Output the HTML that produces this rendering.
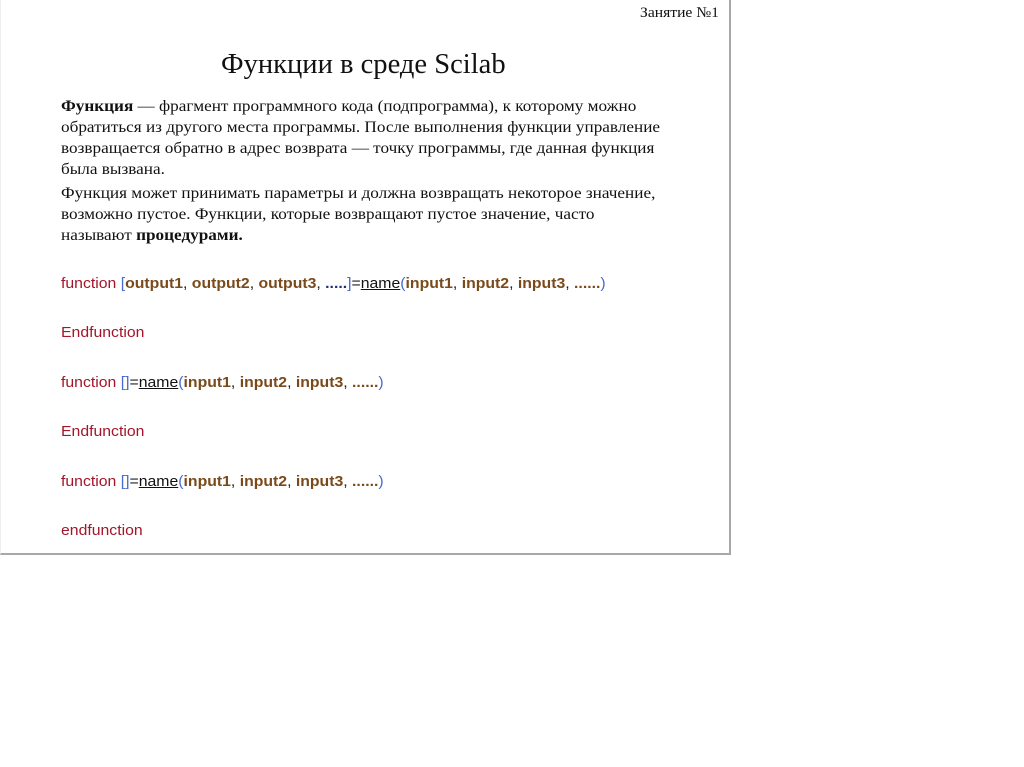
<!DOCTYPE html>
<html><head><meta charset="utf-8"><style>
html,body{margin:0;padding:0;background:#fff;width:1024px;height:767px;overflow:hidden;position:relative}
.slide{position:absolute;left:0;top:0;width:728px;height:553px;border-right:2px solid #a8a8a8;border-bottom:2px solid #a8a8a8;border-left:1px solid #eee;box-sizing:content-box}
.l{position:absolute;white-space:nowrap;transform-origin:0 0}
.s{font-family:"Liberation Serif",serif;color:#111}
.c{font-family:"Liberation Sans",sans-serif;font-size:15px}
.r{color:#a3152a}.b{color:#7a4a1a;font-weight:bold}.u{color:#4a6ad0}.d{color:#1f2f6f;font-weight:bold}.n{color:#111;text-decoration:underline}.k{color:#222}
</style></head><body>
<div class="slide"></div>
<div class="l s" style="left:640px;top:5px;font-size:15px;transform:scaleX(1.04)">Занятие №1</div>
<div class="l s" style="left:221px;top:49px;font-size:28px;transform:scaleX(1.02)">Функции в среде Scilab</div>
<div class="l s" style="left:61px;top:98px;font-size:16px;transform:scaleX(1.074)"><b>Функция</b> — фрагмент программного кода (подпрограмма), к которому можно</div>
<div class="l s" style="left:61px;top:119px;font-size:16px;transform:scaleX(1.074)">обратиться из другого места программы. После выполнения функции управление</div>
<div class="l s" style="left:61px;top:140px;font-size:16px;transform:scaleX(1.074)">возвращается обратно в адрес возврата — точку программы, где данная функция</div>
<div class="l s" style="left:61px;top:161px;font-size:16px;transform:scaleX(1.074)">была вызвана.</div>
<div class="l s" style="left:61px;top:185px;font-size:16px;transform:scaleX(1.074)">Функция может принимать параметры и должна возвращать некоторое значение,</div>
<div class="l s" style="left:61px;top:206px;font-size:16px;transform:scaleX(1.074)">возможно пустое. Функции, которые возвращают пустое значение, часто</div>
<div class="l s" style="left:61px;top:227px;font-size:16px;transform:scaleX(1.074)">называют <b>процедурами.</b></div>

<div class="l c" style="left:61px;top:275px;transform:scaleX(1.053)"><span class="r">function </span><span class="u">[</span><span class="b">output1</span><span class="k">, </span><span class="b">output2</span><span class="k">, </span><span class="b">output3</span><span class="k">, </span><span class="d">.....</span><span class="u">]</span><span class="k">=</span><span class="n">name</span><span class="u">(</span><span class="b">input1</span><span class="k">, </span><span class="b">input2</span><span class="k">, </span><span class="b">input3</span><span class="k">, </span><span class="b">......</span><span class="u">)</span></div>
<div class="l c r" style="left:61px;top:324px;transform:scaleX(1.053)">Endfunction</div>
<div class="l c" style="left:61px;top:374px;transform:scaleX(1.053)"><span class="r">function </span><span class="u">[]</span><span class="k">=</span><span class="n">name</span><span class="u">(</span><span class="b">input1</span><span class="k">, </span><span class="b">input2</span><span class="k">, </span><span class="b">input3</span><span class="k">, </span><span class="b">......</span><span class="u">)</span></div>
<div class="l c r" style="left:61px;top:423px;transform:scaleX(1.053)">Endfunction</div>
<div class="l c" style="left:61px;top:473px;transform:scaleX(1.053)"><span class="r">function </span><span class="u">[]</span><span class="k">=</span><span class="n">name</span><span class="u">(</span><span class="b">input1</span><span class="k">, </span><span class="b">input2</span><span class="k">, </span><span class="b">input3</span><span class="k">, </span><span class="b">......</span><span class="u">)</span></div>
<div class="l c r" style="left:61px;top:522px;transform:scaleX(1.053)">endfunction</div>
</body></html>
